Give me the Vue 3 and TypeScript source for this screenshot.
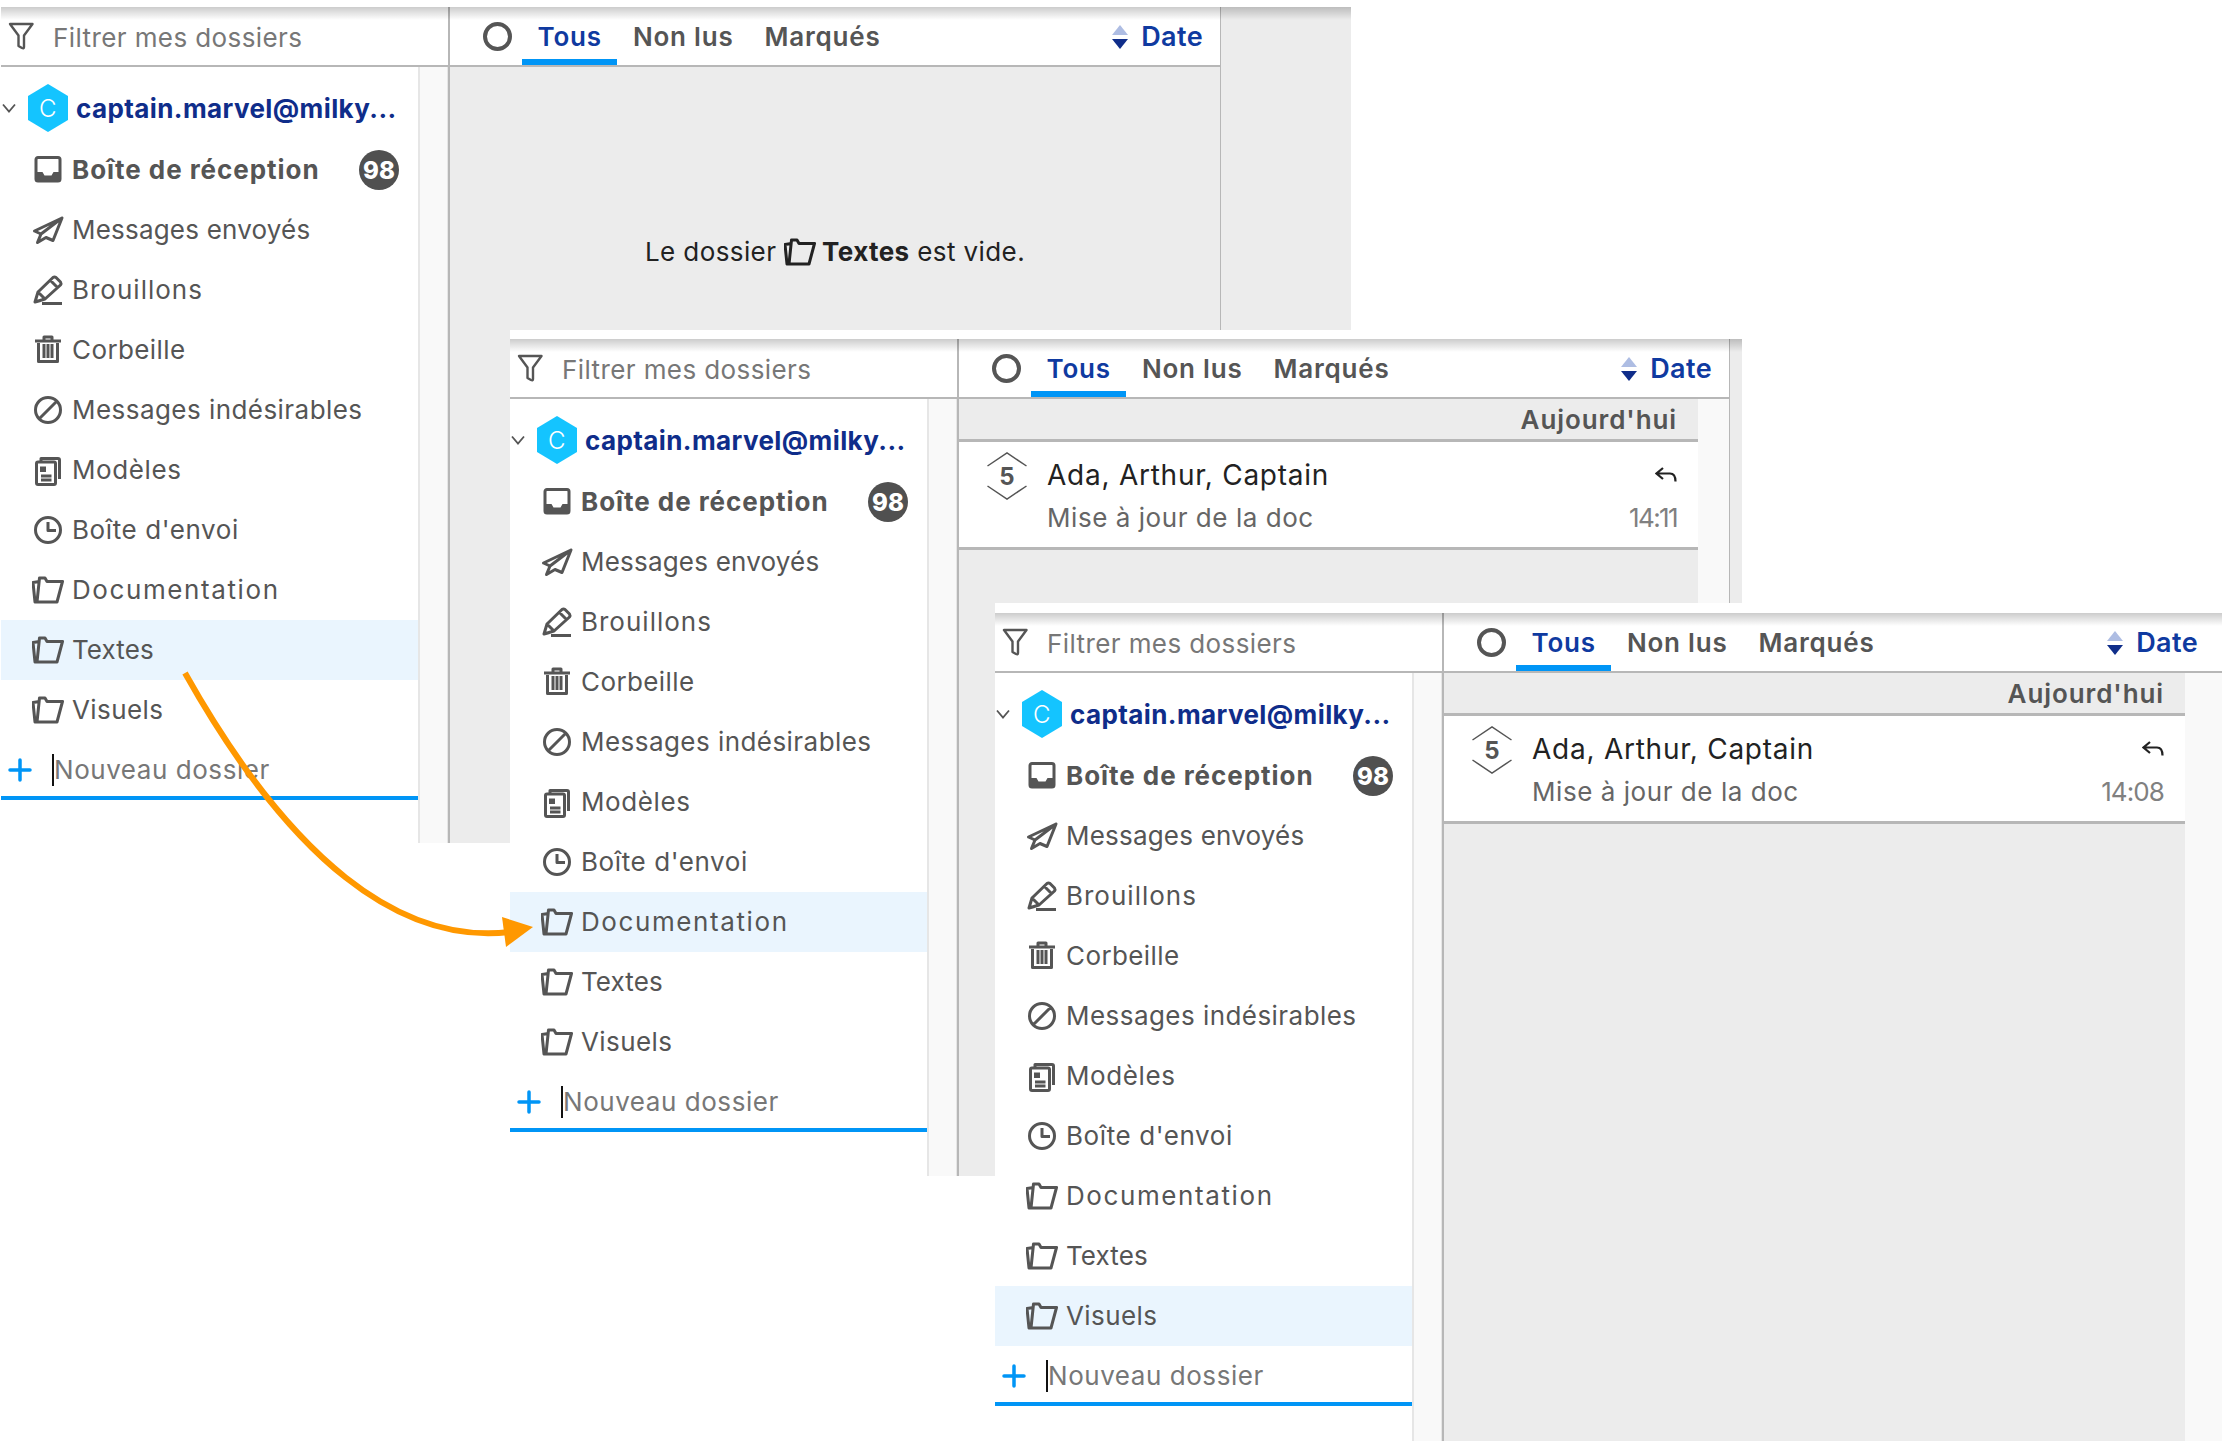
<script setup lang="ts">
interface Shape {
  d: string
  solid?: boolean
}

interface Folder {
  name: string
  icon: string
  bold?: boolean
  count?: number
  // Inter runs narrower than the original face on some words
  tracking?: number
}

interface Snapshot {
  left: number
  top: number
  width: number
  height: number
  band: number
  selected: string
  time?: string
  timeTracking?: number
  strip: number
}

const icons: Record<string, Shape[]> = {
  inbox: [
    { d: 'M6 3.500H26a2 2 0 0 1 2 2V25a2 2 0 0 1-2 2H6a2 2 0 0 1-2-2V5.500a2 2 0 0 1 2-2Z' },
    { d: 'M4 18H10.500L12.500 21.500H19.500L21.500 18H28V25.500A2.500 2.500 0 0 1 25.500 28H6.500A2.500 2.500 0 0 1 4 25.500Z', solid: true },
  ],
  send: [{ d: 'M30 4 2.500 17 9 20 5.500 28.500 14 23.500 21 26.500ZM30 4 9 20' }],
  draft: [{ d: 'M3 28 6 18 21 3.500Q22.500 2.500 24 3.500L28.500 8Q29.500 9.500 28.500 11L13 25ZM6 18 13 25M18.500 6.500 25.500 13.500M3 28 8.500 26.500M10 29.500H30' }],
  trash: [
    { d: 'M3 7H29M12 6V3H20V6M6.500 9V27.500H25.500V9M12 10V24M16 10V24M20 10V24' },
  ],
  ban: [{ d: 'M16 3.500a12.500 12.500 0 1 0 0 25 12.500 12.500 0 0 0 0-25ZM7.500 24.500 24.500 7.500' }],
  templates: [
    { d: 'M9 7V4.500H26Q27.500 4.500 27.500 6V25' },
    { d: 'M6 8H22Q23.500 8 23.500 9.500V29Q23.500 30.500 22 30.500H6Q4.500 30.500 4.500 29V9.500Q4.500 8 6 8ZM9 22H19.500M9 26H19.500' },
    { d: 'M8 12.500H14V18H8Z', solid: true },
  ],
  outbox: [{ d: 'M16 3.500a12.500 12.500 0 1 0 0 25 12.500 12.500 0 0 0 0-25ZM16 8V16.500H24' }],
  folder: [{ d: 'M5 28H25L30.500 7.500H15L13 4H7.500ZM7.500 7.500 1 8.500 3 28H5' }],
}

const folders: Folder[] = [
  { name: 'Boîte de réception', icon: 'inbox', bold: true, count: 98, tracking: 0.95 },
  { name: 'Messages envoyés', icon: 'send', tracking: 0.2 },
  { name: 'Brouillons', icon: 'draft', tracking: 1 },
  { name: 'Corbeille', icon: 'trash' },
  { name: 'Messages indésirables', icon: 'ban', tracking: 0.45 },
  { name: 'Modèles', icon: 'templates', tracking: 0.6 },
  { name: "Boîte d'envoi", icon: 'outbox', tracking: 0.6 },
  { name: 'Documentation', icon: 'folder', tracking: 1.6 },
  { name: 'Textes', icon: 'folder', tracking: 0.1 },
  { name: 'Visuels', icon: 'folder' },
]

const tabs = ['Tous', 'Non lus', 'Marqués']

const snapshots: Snapshot[] = [
  { left: 1, top: 0, width: 1350, height: 843, band: 7, selected: 'Textes', strip: 0 },
  { left: 510, top: 330, width: 1232, height: 846, band: 9, selected: 'Documentation', time: '14:11', timeTracking: -1.6, strip: 31 },
  { left: 995, top: 603, width: 1227, height: 838, band: 10, selected: 'Visuels', time: '14:08', timeTracking: -0.9, strip: 37 },
]
</script>

<template>
  <div class="canvas">
    <section
      v-for="snap in snapshots"
      :key="snap.selected"
      class="snapshot"
      :style="{ left: snap.left + 'px', top: snap.top + 'px', width: snap.width + 'px', height: snap.height + 'px', paddingTop: snap.band + 'px' }"
    >
      <div class="mail">
        <aside class="folders">
          <div class="folders-head">
            <svg class="filter-icon" viewBox="0 0 26 28" fill="none" stroke="currentColor" stroke-width="2.400" stroke-linejoin="round">
              <path d="M2 2H24.500L16 13.500V25Q16 27 14 26L10.500 24V13.500Z" />
            </svg>
            <span class="filter-text">Filtrer mes dossiers</span>
          </div>
          <div class="folders-body">
            <nav class="tree">
              <div class="account">
                <svg class="chevron" viewBox="0 0 14 10" fill="none" stroke="currentColor" stroke-width="1.800">
                  <path d="M1 1.500 7 8.500 13 1.500" />
                </svg>
                <span class="avatar">C</span>
                <span class="account-name">captain.marvel@milky...</span>
              </div>
              <div
                v-for="folder in folders"
                :key="folder.name"
                class="folder"
                :class="{ selected: folder.name === snap.selected, bold: folder.bold }"
              >
                <svg class="icon" viewBox="0 0 32 32">
                  <path
                    v-for="shape in icons[folder.icon]"
                    :key="shape.d"
                    :d="shape.d"
                    :class="shape.solid ? 'solid' : 'line'"
                  />
                </svg>
                <span class="folder-name" :style="{ letterSpacing: (folder.tracking ?? 0.4) + 'px' }">{{ folder.name }}</span>
                <span v-if="folder.count" class="badge">{{ folder.count }}</span>
              </div>
              <div class="new-folder">
                <svg class="plus" viewBox="0 0 24 24" fill="none" stroke="currentColor" stroke-width="3.500" stroke-linecap="round">
                  <path d="M12 2V22M2 12H22" />
                </svg>
                <span class="new-folder-text">Nouveau dossier</span>
              </div>
            </nav>
            <div class="tree-scroll"></div>
          </div>
        </aside>

        <main class="list">
          <header class="list-head">
            <span class="radio"></span>
            <span v-for="(tab, i) in tabs" :key="tab" class="tab" :class="{ active: i === 0 }">{{ tab }}</span>
            <span class="sort">
              <svg class="sort-icon" viewBox="0 0 16 24">
                <path d="M8 0 16 10H0Z" fill="#aebde3" />
                <path d="M0 14H16L8 24Z" fill="#0f2d8a" />
              </svg>
              Date
            </span>
          </header>

          <div v-if="snap.time" class="messages">
            <div class="messages-main">
              <div class="day">Aujourd'hui</div>
              <article class="message">
                <div class="thread">
                  <svg class="thread-lines" viewBox="0 0 40 48" fill="none" stroke="currentColor" stroke-width="1.500">
                    <path d="M.5 14 20 1 39.500 14M.5 34 20 47 39.500 34" />
                  </svg>
                  <span class="thread-count">5</span>
                </div>
                <div class="message-body">
                  <div class="message-line">
                    <span class="recipients">Ada, Arthur, Captain</span>
                    <svg class="reply" viewBox="0 0 22 15" fill="none" stroke="currentColor" stroke-width="2.200">
                      <path d="M8 1 1.500 6.500 8 12M1.500 6.500H15Q20.500 6.500 20.500 14.500" />
                    </svg>
                  </div>
                  <div class="message-line">
                    <span class="subject">Mise à jour de la doc</span>
                    <span class="time" :style="{ letterSpacing: snap.timeTracking + 'px' }">{{ snap.time }}</span>
                  </div>
                </div>
              </article>
            </div>
            <div class="messages-scroll" :style="{ width: snap.strip + 'px' }"></div>
          </div>

          <p v-else class="empty">
            Le dossier
            <svg class="empty-icon" viewBox="0 0 32 32">
              <path class="line" :d="icons.folder[0].d" />
            </svg>
            <b>Textes</b> est vide.
          </p>
        </main>

        <div class="reader"></div>
      </div>
      <div class="top-shadow" :style="{ top: snap.band + 'px' }"></div>
    </section>

    <svg class="arrow" viewBox="0 0 2222 1441">
      <path d="M185 673C290 860 400 945 510 932" fill="none" stroke="#ff9800" stroke-width="6" />
      <path d="M533 927 502 917 506 947Z" fill="#ff9800" />
    </svg>
  </div>
</template>

<style scoped>
.canvas {
  position: relative;
  width: 2222px;
  height: 1441px;
  overflow: hidden;
  background: #fff;
  font-family: Inter, "Open Sans", sans-serif;
  font-size: 26px;
  letter-spacing: 0.4px;
  color: #555;
}

.snapshot {
  position: absolute;
  box-sizing: border-box;
  overflow: hidden;
  background: #fff;
}

.mail {
  display: flex;
  height: 100%;
}

.top-shadow {
  position: absolute;
  left: 0;
  right: 0;
  height: 13px;
  background: linear-gradient(rgba(0, 0, 0, 0.2), rgba(0, 0, 0, 0));
  pointer-events: none;
}

.folders {
  flex: none;
  display: flex;
  flex-direction: column;
  box-sizing: border-box;
  width: 449px;
  border-right: 2px solid #b7b7b7;
}

.folders-head {
  flex: none;
  box-sizing: border-box;
  display: flex;
  align-items: center;
  height: 60px;
  padding-left: 7px;
  border-bottom: 2px solid #b7b7b7;
  color: #555;
}

.filter-icon {
  width: 26px;
  height: 28px;
}

.filter-text {
  margin-left: 19px;
  padding-top: 2px;
  color: #777;
}

.folders-body {
  flex: 1;
  display: flex;
  min-height: 0;
}

.tree {
  flex: none;
  width: 417px;
}

.tree-scroll {
  flex: 1;
  box-sizing: border-box;
  background: #f9f9f9;
  border-left: 2px solid #e6e6e6;
  border-right: 1px solid #e6e6e6;
}

.account {
  display: flex;
  align-items: center;
  height: 60px;
  margin: 11px 0 2px;
  color: #555;
}

.chevron {
  width: 14px;
  height: 10px;
  margin-left: 1px;
}

.avatar {
  display: flex;
  align-items: center;
  justify-content: center;
  width: 40px;
  height: 48px;
  margin-left: 12px;
  clip-path: polygon(50% 0, 100% 25%, 100% 75%, 50% 100%, 0 75%, 0 25%);
  background: #14c4ff;
  color: #fff;
  font-size: 24px;
  font-weight: 300;
}

.account-name {
  margin-left: 8px;
  color: #0f2d8a;
  font-weight: 700;
  white-space: nowrap;
}

.folder {
  display: flex;
  align-items: center;
  height: 60px;
  padding-left: 31px;
}

.folder.selected {
  background: #eaf5fe;
}

.folder.bold {
  font-weight: 700;
}

.folder-name {
  padding-bottom: 2px;
}

.icon {
  flex: none;
  width: 32px;
  height: 32px;
  margin-right: 8px;
}

.line {
  fill: none;
  stroke: #555;
  stroke-width: 3;
  stroke-linejoin: round;
}

.solid {
  fill: #555;
}

.badge {
  display: flex;
  align-items: center;
  justify-content: center;
  width: 40px;
  height: 40px;
  margin-left: auto;
  margin-right: 19px;
  border-radius: 50%;
  background: #505050;
  color: #fff;
  font-size: 24px;
  font-weight: 800;
  letter-spacing: 0;
}

.new-folder {
  box-sizing: border-box;
  display: flex;
  align-items: center;
  height: 60px;
  padding: 4px 0 0 7px;
  border-bottom: 4px solid #0095f6;
}

.plus {
  width: 24px;
  height: 24px;
  color: #0095f6;
}

.new-folder-text {
  margin-left: 20px;
  border-left: 2px solid #111;
  line-height: 32px;
  letter-spacing: 0.55px;
  color: #777;
}

.list {
  flex: none;
  display: flex;
  flex-direction: column;
  box-sizing: border-box;
  background: #ececec;
  width: 771px;
  border-right: 1px solid #b7b7b7;
}

.snapshot:last-of-type .list {
  width: 778px;
  border-right: 0;
}

.snapshot:last-of-type .list-head {
  padding-right: 24px;
}

.list-head {
  flex: none;
  box-sizing: border-box;
  display: flex;
  height: 60px;
  padding-right: 17px;
  background: #fff;
  border-bottom: 2px solid #b7b7b7;
  font-weight: 600;
}

.radio {
  flex: none;
  box-sizing: border-box;
  width: 29px;
  height: 29px;
  margin: 15px 10px 0 33px;
  border: 4px solid #555;
  border-radius: 50%;
}

.tab {
  box-sizing: border-box;
  height: 58px;
  padding: 0 15.500px;
  line-height: 60px;
  letter-spacing: 0.8px;
}

.tab.active {
  color: #0f3aa0;
  border-bottom: 6px solid #0095f6;
}

.sort {
  display: flex;
  align-items: center;
  gap: 13px;
  margin-left: auto;
  padding-top: 1px;
  font-size: 27px;
  color: #0f3aa0;
}

.sort-icon {
  width: 16px;
  height: 24px;
}

.messages {
  flex: 1;
  display: flex;
  min-height: 0;
}

.messages-main {
  flex: 1;
}

.messages-scroll {
  flex: none;
  background: #f9f9f9;
}

.day {
  box-sizing: border-box;
  height: 43px;
  padding-right: 21px;
  border-bottom: 3px solid #b7b7b7;
  text-align: right;
  line-height: 41px;
  letter-spacing: 0.9px;
  font-weight: 600;
}

.message {
  box-sizing: border-box;
  display: flex;
  height: 108px;
  padding-left: 28px;
  background: #fff;
  border-bottom: 3px solid #b7b7b7;
}

.thread {
  position: relative;
  flex: none;
  display: flex;
  align-items: center;
  justify-content: center;
  width: 40px;
  height: 48px;
  margin-top: 10px;
}

.thread-lines {
  position: absolute;
  inset: 0;
}

.thread-count {
  font-weight: 700;
  font-size: 24px;
}

.message-body {
  flex: 1;
  margin-left: 20px;
  padding: 11px 21px 0 0;
}

.message-line {
  display: flex;
  align-items: center;
  justify-content: space-between;
  height: 43px;
}

.recipients {
  color: #222;
  font-size: 28px;
  letter-spacing: 0.75px;
}

.reply {
  width: 22px;
  height: 15px;
  color: #222;
}

.subject {
  letter-spacing: 0.55px;
  color: #666;
}

.time {
  color: #808080;
}

.empty {
  margin: 0;
  padding-top: 160px;
  line-height: 50px;
  text-align: center;
  color: #222;
}

.empty b {
  font-weight: 700;
}

.empty-icon {
  width: 32px;
  height: 32px;
  margin: 0 6px 0 0;
  vertical-align: -7px;
}

.empty-icon .line {
  stroke: #222;
  stroke-width: 3;
}

.reader {
  flex: 1;
  background: #ececec;
}

.arrow {
  position: absolute;
  inset: 0;
  width: 2222px;
  height: 1441px;
  pointer-events: none;
}
</style>

<style>
body {
  background: #fff;
  overflow: hidden;
}
</style>
